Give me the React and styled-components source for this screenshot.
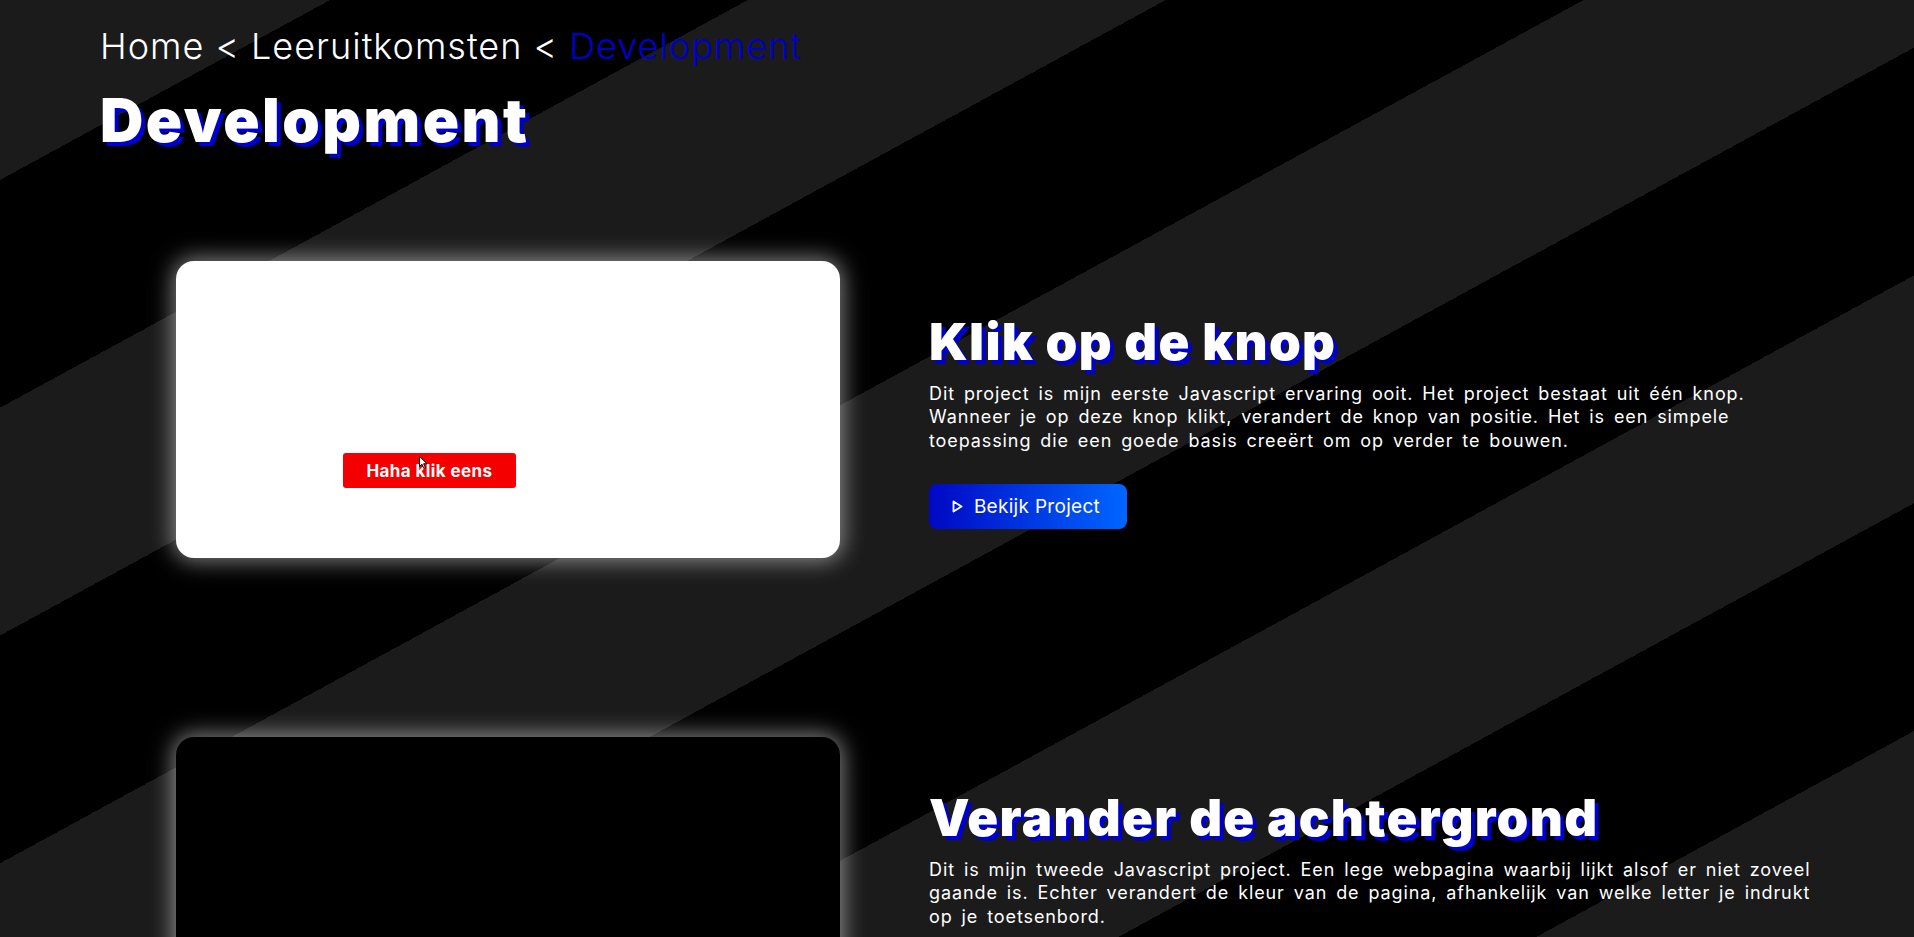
import React from "react";
import styled, { createGlobalStyle } from "styled-components";

const colors = {
  blue: "#0000cd",
  stripe: "#1b1b1b",
};

const GlobalStyle = createGlobalStyle`
  html, body {
    margin: 0;
    min-height: 100%;
  }

  body {
    background: repeating-linear-gradient(
      151.4deg,
      ${colors.stripe} 0 158px,
      #000 158px 358px,
      ${colors.stripe} 358px 400px
    );
    color: #fff;
    font-family: Inter, "Liberation Sans", sans-serif;
  }
`;

const projects = [
  {
    title: "Klik op de knop",
    lines: [
      "Dit project is mijn eerste Javascript ervaring ooit. Het project bestaat uit één knop.",
      "Wanneer je op deze knop klikt, verandert de knop van positie. Het is een simpele",
      "toepassing die een goede basis creeërt om op verder te bouwen.",
    ],
    preview: "button",
  },
  {
    title: "Verander de achtergrond",
    lines: [
      "Dit is mijn tweede Javascript project. Een lege webpagina waarbij lijkt alsof er niet zoveel",
      "gaande is. Echter verandert de kleur van de pagina, afhankelijk van welke letter je indrukt",
      "op je toetsenbord.",
    ],
    preview: "dark",
  },
];

const PlayIcon = () => (
  <svg width='11' height='13' viewBox='0 0 11 13' fill='none'>
    <path
      d='M1.5 1.5 L9.5 6.5 L1.5 11.5 Z'
      stroke='#fff'
      strokeWidth='1.8'
      strokeLinejoin='round'
    />
  </svg>
);

const CursorIcon = () => (
  <svg width='9' height='13' viewBox='0 0 9 13'>
    <path
      d='M0.5 0.5 L0.5 10.5 L3 8.2 L4.8 12.3 L6.3 11.6 L4.6 7.7 L8 7.7 Z'
      fill='#fff'
      stroke='#000'
      strokeWidth='0.9'
    />
  </svg>
);

const Preview = ({ kind }) => {
  if (kind === "dark") return <StyledCard $dark />;
  return (
    <StyledCard>
      <JumpButton>
        Haha klik eens
        <Cursor>
          <CursorIcon />
        </Cursor>
      </JumpButton>
    </StyledCard>
  );
};

const App = () => {
  return (
    <>
      <GlobalStyle />
      <StyledPage>
        <Breadcrumb>
          Home &lt; Leeruitkomsten &lt; <span>Development</span>
        </Breadcrumb>
        <PageTitle>Development</PageTitle>

        <ProjectList>
          {projects.map((project) => (
            <ProjectRow key={project.title}>
              <Preview kind={project.preview} />
              <ProjectText>
                <ProjectTitle>{project.title}</ProjectTitle>
                <ProjectDescription>
                  {project.lines.map((line, i) => (
                    <React.Fragment key={i}>
                      {line}
                      {i < project.lines.length - 1 && <br />}
                    </React.Fragment>
                  ))}
                </ProjectDescription>
                <ProjectButton type='button'>
                  <PlayIcon />
                  Bekijk Project
                </ProjectButton>
              </ProjectText>
            </ProjectRow>
          ))}
        </ProjectList>
      </StyledPage>
    </>
  );
};

const StyledPage = styled.main`
  padding: 24px 0 140px 100px;
`;

const Breadcrumb = styled.nav`
  font-size: 36px;
  line-height: 44px;
  font-weight: 300;
  letter-spacing: 1px;

  span {
    color: ${colors.blue};
  }
`;

const PageTitle = styled.h1`
  margin: 17px 0 0;
  font-size: 60px;
  line-height: 70px;
  font-weight: 900;
  letter-spacing: 2.5px;
  text-shadow: 4px 4px 0 ${colors.blue};
`;

const ProjectList = styled.section`
  display: flex;
  flex-direction: column;
  gap: 179px;
  margin-top: 106px;
  padding-left: 76px;
`;

const ProjectRow = styled.article`
  display: flex;
  align-items: flex-start;
  gap: 89px;
`;

const StyledCard = styled.div`
  position: relative;
  flex: 0 0 664px;
  height: 297px;
  border-radius: 18px;
  background: ${({ $dark }) => ($dark ? "#000" : "#fff")};
  box-shadow: 0 0 22px 3px rgba(255, 255, 255, 0.5);
  overflow: hidden;
`;

const JumpButton = styled.div`
  position: absolute;
  left: 167px;
  top: 192px;
  width: 173px;
  height: 35px;
  display: flex;
  align-items: center;
  justify-content: center;
  border-radius: 3px;
  background: #f50000;
  color: #fff;
  font-size: 17px;
  font-weight: 700;
  letter-spacing: 0.4px;
`;

const Cursor = styled.span`
  position: absolute;
  left: 76px;
  top: 3px;
  line-height: 0;
`;

const ProjectText = styled.div`
  padding-top: 50px;
`;

const ProjectTitle = styled.h2`
  margin: 0;
  font-size: 51px;
  line-height: 61px;
  font-weight: 900;
  letter-spacing: 1.3px;
  text-shadow: 4px 4px 0 ${colors.blue};
  white-space: nowrap;
`;

const ProjectDescription = styled.p`
  margin: 10px 0 0;
  font-size: 18px;
  line-height: 23.3px;
  letter-spacing: 0.9px;
  word-spacing: 3px;
  white-space: nowrap;
`;

const ProjectButton = styled.button`
  display: flex;
  align-items: center;
  justify-content: center;
  gap: 11px;
  width: 198px;
  height: 45px;
  margin-top: 32px;
  padding: 0 4px 0 0;
  border: none;
  border-radius: 8px;
  background: linear-gradient(90deg, #0008c4, #0066ff);
  color: #fff;
  font-family: inherit;
  font-size: 19px;
  letter-spacing: 0.3px;
  cursor: pointer;
`;

export default App;
